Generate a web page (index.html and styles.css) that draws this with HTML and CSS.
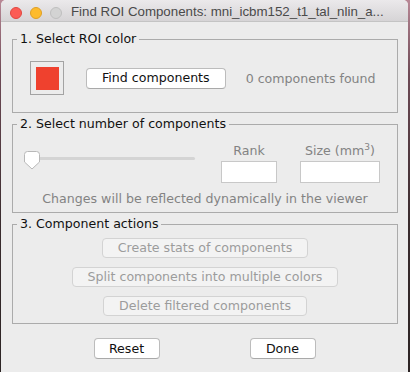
FILE: index.html
```html
<!DOCTYPE html>
<html>
<head>
<meta charset="utf-8">
<link rel="stylesheet" href="styles.css">
</head>
<body>
<div class="window">
  <div class="titlebar">
    <span class="light red"></span>
    <span class="light yellow"></span>
    <span class="light gray"></span>
    <span class="title">Find ROI Components: mni_icbm152_t1_tal_nlin_a...</span>
  </div>
  <div class="content">
    <fieldset class="group g1">
      <legend>1. Select ROI color</legend>
      <div class="row1">
        <div class="swatch"><div class="swatch-fill"></div></div>
        <button class="btn">Find components</button>
        <span class="muted found">0 components found</span>
      </div>
    </fieldset>
    <fieldset class="group g2">
      <legend>2. Select number of components</legend>
      <div class="row2">
        <div class="slider">
          <div class="track"></div>
          <svg class="thumb" width="17" height="19" viewBox="0 0 17 19">
            <path d="M0.5 3.5 Q0.5 0.5 3.5 0.5 H12.5 Q15.5 0.5 15.5 3.5 V11 L8 18 L0.5 11 Z" fill="#ffffff" stroke="#b8b8b8" stroke-width="1"/>
          </svg>
        </div>
        <div class="field rank">
          <span class="muted lbl">Rank</span>
          <div class="input"></div>
        </div>
        <div class="field size">
          <span class="muted lbl">Size (mm<sup>3</sup>)</span>
          <div class="input"></div>
        </div>
      </div>
      <div class="muted hint">Changes will be reflected dynamically in the viewer</div>
    </fieldset>
    <fieldset class="group g3">
      <legend>3. Component actions</legend>
      <div class="actions">
        <button class="btn disabled">Create stats of components</button>
        <button class="btn disabled">Split components into multiple colors</button>
        <button class="btn disabled">Delete filtered components</button>
      </div>
    </fieldset>
    <div class="footer">
      <button class="btn wide">Reset</button>
      <button class="btn wide">Done</button>
    </div>
  </div>
</div>
</body>
</html>
```
FILE: styles.css
```css
html, body {
  margin: 0;
  padding: 0;
}
body {
  width: 410px;
  height: 372px;
  overflow: hidden;
  background: linear-gradient(to bottom, #b98896 0%, #6d4a55 20%, #3a2c2e 60%, #2c2424 100%);
  font-family: "DejaVu Sans", sans-serif;
  font-size: 12.6px;
  color: #1a1a1a;
}
.window {
  margin-left: 1px;
  width: 407px;
  height: 372px;
  background: #ececec;
  border-radius: 5px 5px 0 0;
  overflow: hidden;
}
.titlebar {
  height: 21px;
  border-bottom: 1px solid #c4c4c4;
  background: linear-gradient(to bottom, #ebe9eb, #d6d4d6);
  display: flex;
  align-items: center;
  padding-left: 9px;
  gap: 8px;
}
.light {
  width: 12px;
  height: 12px;
  border-radius: 50%;
  box-sizing: border-box;
  flex: none;
  margin-top: 5px;
  margin-top: 4px;
}
.red { background: #fc5c55; border: 1px solid #e1463f; }
.yellow { background: #fdbb2d; border: 1px solid #df9f25; }
.gray { background: #d3d3d3; border: 1px solid #bfbfbf; }
.title {
  margin-left: 1px;
  margin-top: 2px;
  font-family: "Liberation Sans", Arial, sans-serif;
  font-size: 13.3px;
  color: #4a4a4a;
  white-space: nowrap;
}
.content {
  padding: 9px 10px 0 11px;
}
.group {
  margin: 0;
  padding: 0 4px;
  border: 1px solid #ababab;
  min-width: 0;
}
.group + .group {
  margin-top: 3px;
}
legend {
  padding: 0 3px;
  line-height: 16px;
  color: #111;
}
.row1 {
  display: flex;
  align-items: center;
  padding: 14px 0 17px 13px;
}
.swatch {
  width: 34px;
  height: 34px;
  box-sizing: border-box;
  border: 1px solid #a3a3a3;
  padding: 5px;
}
.swatch-fill {
  width: 23px;
  height: 23px;
  background: #ef412e;
}
.btn {
  font-family: "DejaVu Sans", sans-serif;
  font-size: 12.6px;
  color: #111;
  background: #ffffff;
  border: 1px solid #bcbcbc;
  border-bottom-color: #a9a9a9;
  border-radius: 4px;
  height: 20px;
  padding: 0 15px;
  margin: 0;
  line-height: 18px;
  box-sizing: border-box;
  white-space: nowrap;
}
.row1 .btn {
  margin-left: 22px;
  height: 21px;
}
.muted {
  color: #838383;
}
.found {
  margin-left: 20px;
}
.g2 {
  padding-bottom: 5px;
}
.row2 {
  display: flex;
  align-items: flex-start;
  padding-top: 11px;
  padding-left: 7px;
}
.slider {
  position: relative;
  width: 171px;
  height: 19px;
  margin-top: 8px;
}
.track {
  margin: 6px 0 0 4px;
  height: 3px;
  background: #d4d4d4;
  border-radius: 2px;
}
.thumb {
  position: absolute;
  left: 0;
  top: 0;
}
.field {
  display: flex;
  flex-direction: column;
  align-items: center;
  gap: 2px;
}
.rank { margin-left: 26px; }
.size { margin-left: 23px; }
.lbl {
  line-height: 16px;
  height: 16px;
  white-space: nowrap;
}
sup {
  font-size: 9px;
  line-height: 0;
  vertical-align: 5px;
}
.input {
  height: 22px;
  box-sizing: border-box;
  background: #fff;
  border: 1px solid #c8c8c8;
}
.rank .input { width: 56px; }
.size .input { width: 80px; }
.hint {
  margin-top: 8px;
  line-height: 16px;
  text-align: center;
}
.actions {
  display: flex;
  flex-direction: column;
  align-items: center;
  gap: 9px;
  padding: 6px 0 7px;
}
.btn.disabled {
  background: #f3f3f3;
  border-color: #d3d3d3;
  color: #9c9c9c;
}
.footer {
  display: flex;
  justify-content: center;
  gap: 90px;
  margin-top: 14px;
  padding-right: 1px;
}
.btn.wide {
  height: 21px;
  min-width: 66px;
  padding: 0 14px;
}
```
